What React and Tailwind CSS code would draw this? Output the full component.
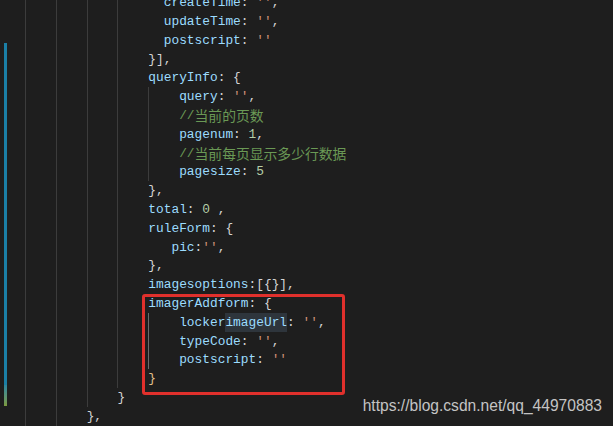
const P = 'text-[#9cdcfe]'
const W = 'text-[#d4d4d4]'
const S = 'text-[#ce9178]'
const N = 'text-[#b5cea8]'
const C = 'text-[#6a9955] font-[Noto_Sans_CJK_SC,sans-serif] text-[13.8px]'
const Y = 'text-[#e2c08d]'

const lines = [
  { col: 22, t: [['createTime', P], [': ', W], ["''", S], [',', W]] },
  { col: 22, t: [['updateTime', P], [': ', W], ["''", S], [',', W]] },
  { col: 22, t: [['postscript', P], [': ', W], ["''", S]] },
  { col: 20, t: [['}],', W]] },
  { col: 20, t: [['queryInfo', P], [': {', W]] },
  { col: 24, t: [['query', P], [': ', W], ["''", S], [',', W]] },
  { col: 24, t: [['//', 'text-[#6a9955]'], ['当前的页数', C]] },
  { col: 24, t: [['pagenum', P], [': ', W], ['1', N], [',', W]] },
  { col: 24, t: [['//', 'text-[#6a9955]'], ['当前每页显示多少行数据', C]] },
  { col: 24, t: [['pagesize', P], [': ', W], ['5', N]] },
  { col: 20, t: [['},', W]] },
  { col: 20, t: [['total', P], [': ', W], ['0', N], [' ,', W]] },
  { col: 20, t: [['ruleForm', P], [': {', W]] },
  { col: 23, t: [['pic', P], [':', W], ["''", S], [',', W]] },
  { col: 20, t: [['},', W]] },
  { col: 20, t: [['imagesoptions', P], [':[{}],', W]] },
  { col: 20, t: [['imagerAddform', P], [': {', W]] },
  { col: 24, t: [['locker', P], ['imageUrl', P + ' bg-[#2e353c]'], [': ', W], ["''", S], [',', W]] },
  { col: 24, t: [['typeCode', P], [': ', W], ["''", S], [',', W]] },
  { col: 24, t: [['postscript', P], [': ', W], ["''", S]] },
  { col: 20, t: [['}', Y]] },
  { col: 16, t: [['}', W]] },
  { col: 12, t: [['},', W]] },
]

function Line({ line, idx }) {
  const guides = []
  for (let k = 4; k + 4 <= line.col; k += 4) guides.push(k)
  const rest = line.col - 4 - guides.length * 4
  return (
    <div className="flex h-[18.8px] items-center whitespace-pre">
      {guides.map(k => (
        <span
          key={k}
          className={
            'w-[4ch] self-stretch border-l ' +
            (idx >= 17 && idx <= 19 && k === 20 ? 'border-[#6b6b6b]' : 'border-[#3c3c3c]')
          }
        />
      ))}
      {rest > 0 && <span>{' '.repeat(rest)}</span>}
      {line.t.map(([text, cls], i) => (
        <span key={i} className={cls}>{text}</span>
      ))}
    </div>
  )
}

export default function App() {
  return (
    <div className="relative w-[613px] h-[426px] overflow-hidden bg-[#1e1e1e] flex">
      {/* git gutter */}
      <div className="w-[25px] shrink-0 pl-[4px] pt-[43px]">
        <div className="w-[3px] h-[342px] bg-[#1b7fa6]" />
        <div className="w-[3px] h-[21px] bg-linear-to-b from-[#2a86a0] to-[#7c9a3c]" />
      </div>

      {/* code */}
      <div className="-mt-[6.5px] font-[Liberation_Mono,Noto_Sans_CJK_SC,monospace] text-[12.85px] text-[#d4d4d4]">
        {lines.map((l, i) => (
          <Line key={i} line={l} idx={i} />
        ))}
      </div>

      {/* annotation box */}
      <div className="absolute left-[142px] top-[294px] w-[203px] h-[101px] border-[3px] border-[#e0302c] rounded-[3px]" />

      {/* watermark */}
      <div className="absolute right-[11px] top-[396px] font-[Liberation_Sans,Arial,sans-serif] text-[15.6px] leading-[20px] text-[#c4c4c4]">
        https://blog.csdn.net/qq_44970883
      </div>
    </div>
  )
}
